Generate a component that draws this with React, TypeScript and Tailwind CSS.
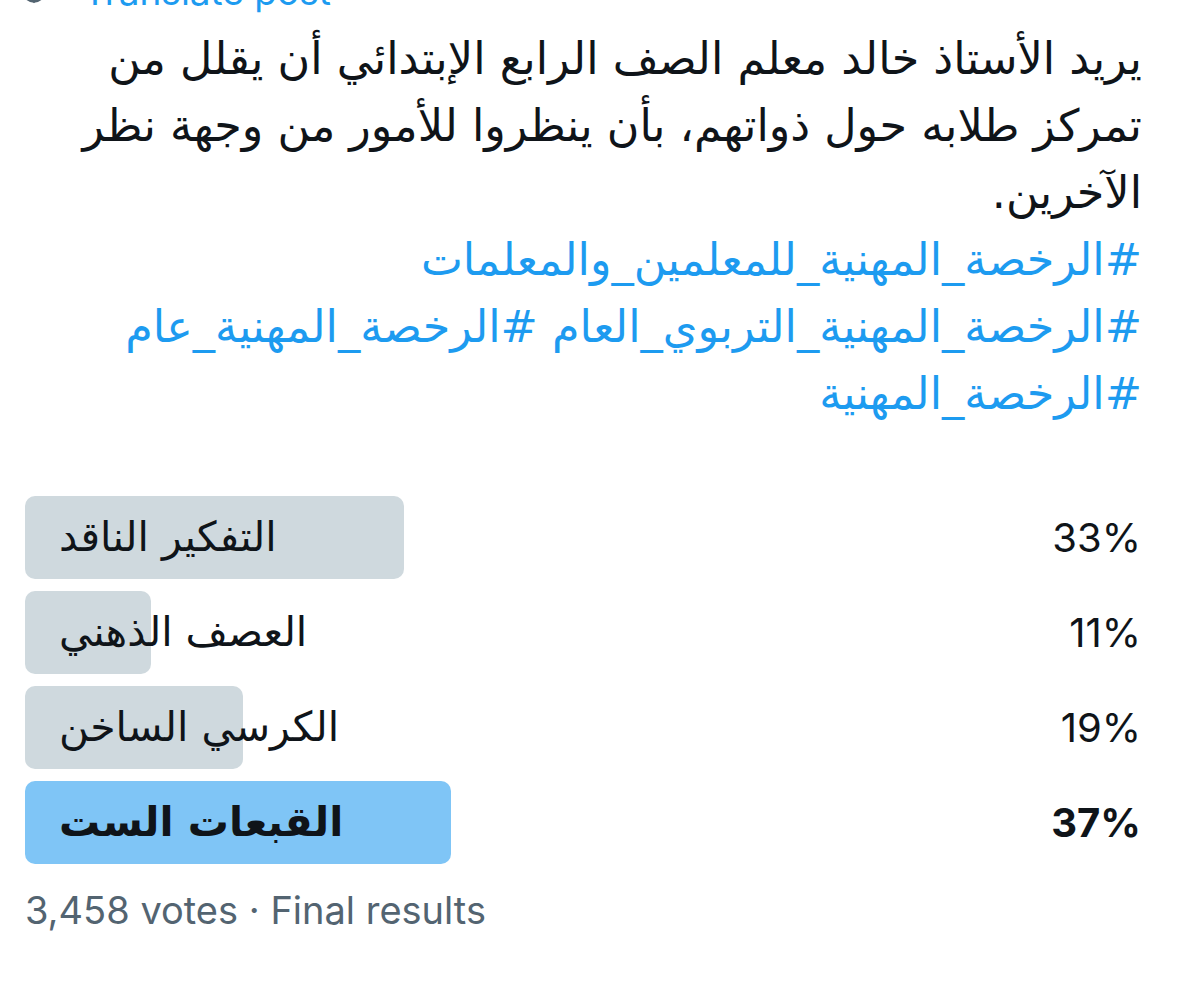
import React from "react";

const lines = [
  "يريد الأستاذ خالد معلم الصف الرابع الإبتدائي أن يقلل من",
  "تمركز طلابه حول ذواتهم، بأن ينظروا للأمور من وجهة نظر",
  "الآخرين.",
];
const tags = [
  "#الرخصة_المهنية_للمعلمين_والمعلمات",
  "#الرخصة_المهنية_التربوي_العام #الرخصة_المهنية_عام",
  "#الرخصة_المهنية",
];

const options = [
  { label: "التفكير الناقد", pct: "33%", w: "w-[379px]", win: false },
  { label: "العصف الذهني", pct: "11%", w: "w-[126px]", win: false },
  { label: "الكرسي الساخن", pct: "19%", w: "w-[218px]", win: false },
  { label: "القبعات الست", pct: "37%", w: "w-[426px]", win: true },
];

export default function App() {
  return (
    <div className="w-[1200px] h-[988px] overflow-hidden bg-white text-[#0f1419] font-['Inter','DejaVu_Sans',sans-serif]">
      {/* translate row, cut off at top */}
      <div className="-mt-[33px] flex items-center h-[48px] pl-[20px]">
        <svg width="28" height="28" viewBox="0 0 24 24" fill="none" stroke="#536471" strokeWidth="2" className="shrink-0">
          <circle cx="12" cy="12" r="9" />
          <path d="M3 12h18M12 3c2.5 2.5 3.8 5.5 3.8 9s-1.3 6.5-3.8 9c-2.5-2.5-3.8-5.5-3.8-9S9.5 5.5 12 3z" />
        </svg>
        <span className="ml-[35px] text-[37px] leading-none text-[#1d9bf0]">Translate post</span>
      </div>

      {/* tweet text */}
      <div dir="rtl" className="mt-[10px] pr-[58px] text-right font-['DejaVu_Sans',sans-serif] text-[44.5px] leading-[67px]">
        {lines.map((l, i) => (
          <div key={i} className="whitespace-nowrap">{l}</div>
        ))}
        {tags.map((l, i) => (
          <div key={i} className="whitespace-nowrap text-[#1d9bf0]">{l}</div>
        ))}
      </div>

      {/* poll */}
      <div className="mt-[69px] pl-[25px] pr-[59px] flex flex-col gap-[12px]">
        {options.map((o) => (
          <div key={o.label} className="grid h-[83px]">
            <div
              className={`col-start-1 row-start-1 h-[83px] rounded-[10px] ${o.w} ${o.win ? "bg-[#7fc5f6]" : "bg-[#cfd9de]"}`}
            />
            <div className="col-start-1 row-start-1 flex items-center justify-between pl-[34px]">
              <span
                dir="rtl"
                className={`font-['DejaVu_Sans',sans-serif] text-[41px] ${o.win ? "font-bold" : ""}`}
              >
                {o.label}
              </span>
              <span className={`text-[40px] ${o.win ? "font-bold" : ""}`}>{o.pct}</span>
            </div>
          </div>
        ))}
      </div>

      {/* footer */}
      <div className="mt-[22px] pl-[25px] text-[38px] leading-[48px] text-[#536471]">
        3,458 votes · Final results
      </div>
    </div>
  );
}
